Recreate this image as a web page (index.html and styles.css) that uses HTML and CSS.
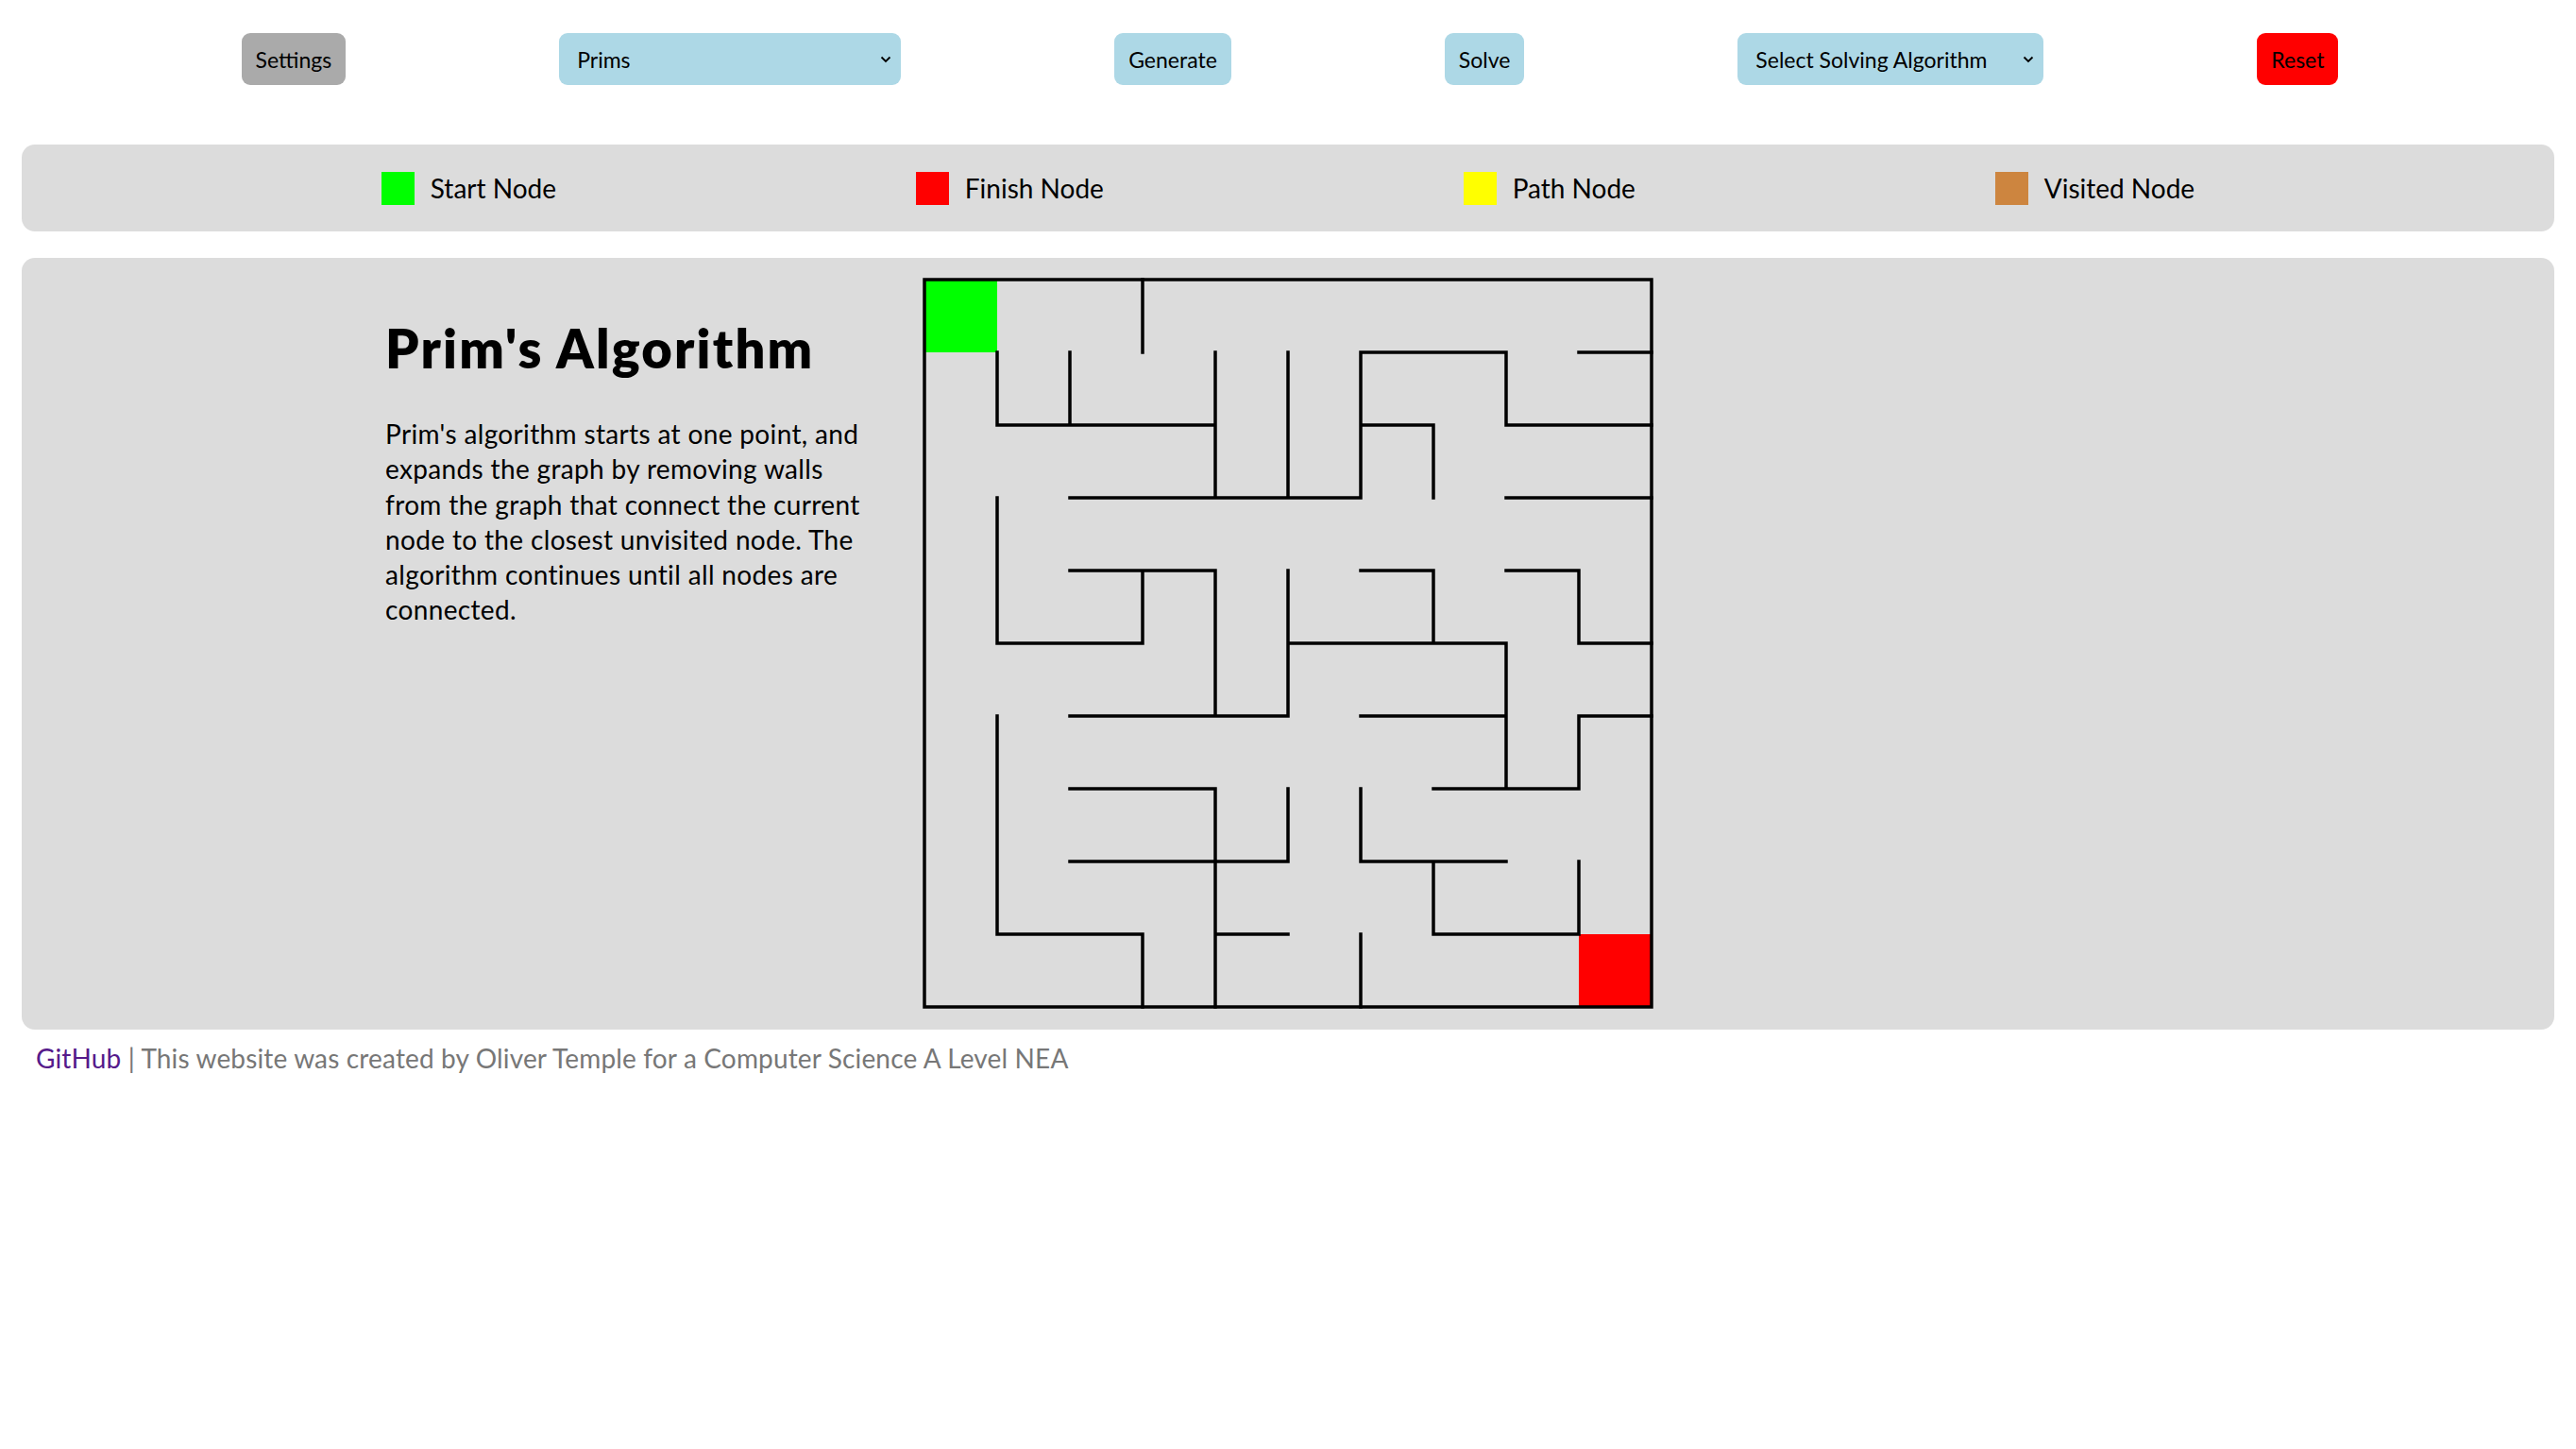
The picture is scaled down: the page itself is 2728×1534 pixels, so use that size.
FILE: index.html
```html
<!DOCTYPE html>
<html lang="en">
<head>
<meta charset="utf-8">
<title>Maze Generator</title>
<link rel="stylesheet" href="styles.css">
</head>
<body>
<header class="toolbar">
  <button class="btn btn-grey">Settings</button>
  <span class="select-wrap select-gen">
    <select class="select"><option>Prims</option><option>Recursive Backtracking</option><option>Kruskals</option></select>
    <svg class="chevron" viewBox="0 0 12 8" width="12" height="8"><path d="M1.5 1.5L6 6L10.5 1.5" fill="none" stroke="#000" stroke-width="1.8"/></svg>
  </span>
  <button class="btn btn-blue">Generate</button>
  <button class="btn btn-blue">Solve</button>
  <span class="select-wrap select-solve">
    <select class="select"><option>Select Solving Algorithm</option><option>Dijkstra</option><option>A*</option></select>
    <svg class="chevron" viewBox="0 0 12 8" width="12" height="8"><path d="M1.5 1.5L6 6L10.5 1.5" fill="none" stroke="#000" stroke-width="1.8"/></svg>
  </span>
  <button class="btn btn-red">Reset</button>
</header>

<section class="legend">
  <div class="legend-item"><span class="swatch swatch-start"></span>Start Node</div>
  <div class="legend-item"><span class="swatch swatch-finish"></span>Finish Node</div>
  <div class="legend-item"><span class="swatch swatch-path"></span>Path Node</div>
  <div class="legend-item"><span class="swatch swatch-visited"></span>Visited Node</div>
</section>

<main class="panel">
  <div class="info">
    <h2 class="info-title">Prim's Algorithm</h2>
    <p class="info-text">Prim's algorithm starts at one point, and expands the graph by removing walls from the graph that connect the current node to the closest unvisited node. The algorithm continues until all nodes are connected.</p>
  </div>
  <svg class="maze" viewBox="-2 -2 774 774" width="774" height="774">
    <rect x="0" y="0" width="77" height="77" fill="#00ff00"/>
    <rect x="693" y="693" width="77" height="77" fill="#ff0000"/>
    <path class="walls" d="
      M462 77H616M693 77H770
      M77 154H308M462 154H539M616 154H770
      M154 231H462M616 231H770
      M154 308H308M462 308H539M616 308H693
      M77 385H231M385 385H616M693 385H770
      M154 462H385M462 462H616M693 462H770
      M154 539H308M539 539H693
      M154 616H385M462 616H616
      M77 693H231M308 693H385M539 693H693
      M77 77V154M77 231V385M77 462V693
      M154 77V154
      M231 0V77M231 308V385M231 693V770
      M308 77V231M308 308V462M308 539V770
      M385 77V231M385 308V462M385 539V616
      M462 77V231M462 539V616M462 693V770
      M539 154V231M539 308V385M539 616V693
      M616 77V154M616 385V539
      M693 308V385M693 462V539M693 616V693"/>
    <rect class="walls" x="0" y="0" width="770" height="770" fill="none"/>
  </svg>
  <div class="spacer"></div>
</main>

<footer class="footer">
  <a class="footer-link" href="#">GitHub</a> | This website was created by Oliver Temple for a Computer Science A Level NEA
</footer>
</body>
</html>
```

FILE: styles.css
```css
* { box-sizing: border-box; }

body {
  margin: 0;
  font-family: "Lato", "Segoe UI", sans-serif;
  color: #000;
  background: #fff;
}

.toolbar {
  display: flex;
  justify-content: center;
  align-items: center;
  gap: 226px;
  padding-top: 35px;
  padding-left: 4px;
}

.btn {
  height: 55px;
  border: none;
  border-radius: 9px;
  font-family: inherit;
  font-size: 23px;
  color: #000;
  padding: 0 15px;
}

.btn-grey { background: #aaaaaa; }
.btn-blue { background: #add8e6; }
.btn-red { background: #ff0000; }

.select-wrap {
  position: relative;
  display: inline-block;
  height: 55px;
}

.select-gen { width: 362px; }
.select-solve { width: 324px; }

.select {
  appearance: none;
  -webkit-appearance: none;
  width: 100%;
  height: 55px;
  border: none;
  border-radius: 9px;
  background: #add8e6;
  font-family: inherit;
  font-size: 23px;
  color: #000;
  padding: 0 40px 0 19px;
}

.chevron {
  position: absolute;
  right: 10px;
  top: 24px;
  pointer-events: none;
}

.legend {
  margin: 63px 23px 0;
  height: 92px;
  border-radius: 14px;
  background: #dcdcdc;
  display: flex;
  justify-content: space-evenly;
  align-items: center;
  font-size: 28px;
}

.legend-item {
  display: flex;
  align-items: center;
  gap: 17px;
}

.swatch {
  width: 35px;
  height: 35px;
  display: inline-block;
}
.swatch-start { background: #00ff00; }
.swatch-finish { background: #ff0000; }
.swatch-path { background: #ffff00; }
.swatch-visited { background: #cd853f; }

.panel {
  margin: 28px 23px 0;
  background: #dcdcdc;
  border-radius: 14px;
  padding: 21px 0 22px;
  display: grid;
  grid-template-columns: 1fr 774px 1fr;
}

.info {
  justify-self: end;
  width: 525px;
  margin-right: 44px;
}

.info-title {
  margin: 41px 0 0;
  font-size: 56px;
  font-weight: 800;
  letter-spacing: 2.2px;
  line-height: 67px;
}

.info-text {
  margin: 39px 0 0;
  width: 510px;
  font-size: 28px;
  letter-spacing: 0.35px;
  line-height: 37.3px;
}

.maze { display: block; }

.walls {
  fill: none;
  stroke: #000;
  stroke-width: 3.5;
  stroke-linecap: square;
}

.footer {
  padding: 12px 38px;
  font-size: 28px;
  letter-spacing: 0.15px;
  line-height: 37px;
  color: #777;
}

.footer-link {
  color: #551a8b;
  text-decoration: none;
}
```
